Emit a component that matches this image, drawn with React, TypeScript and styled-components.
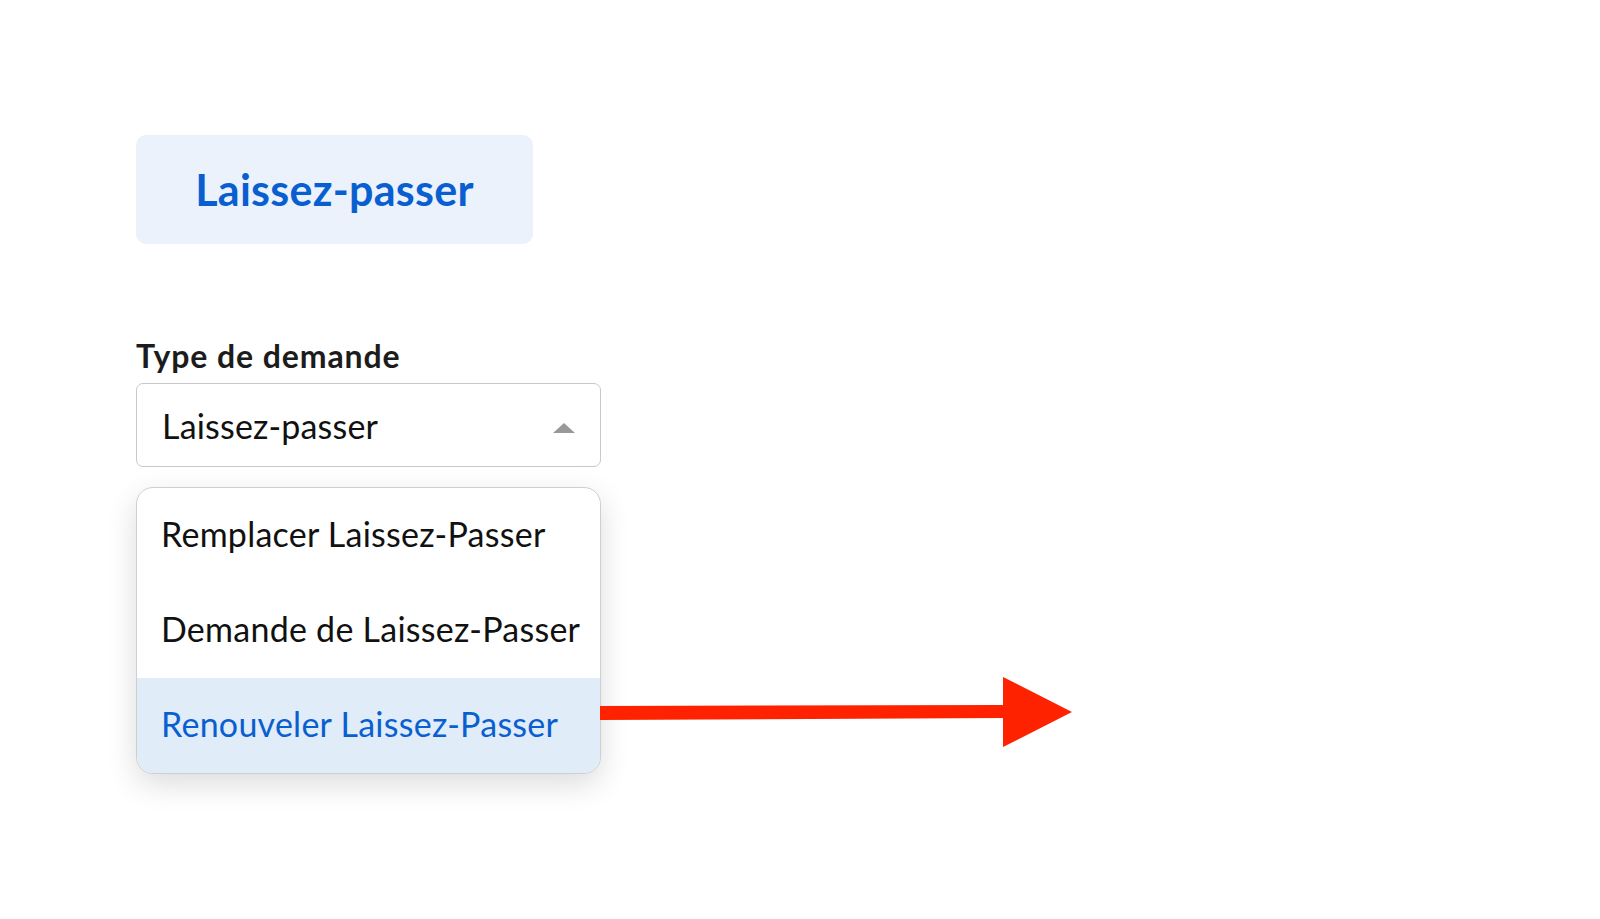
import styled, { createGlobalStyle } from "styled-components"

const Global = createGlobalStyle`
  html, body {
    margin: 0;
    padding: 0;
    background: #ffffff;
  }
  body {
    font-family: Lato, "Open Sans", sans-serif;
    color: #1a1a1a;
  }
`

const Page = styled.div`
  position: relative;
  width: 1600px;
  height: 919px;
  padding: 135px 0 0 136px;
  box-sizing: border-box;
`

const Badge = styled.div`
  display: flex;
  align-items: center;
  justify-content: center;
  width: 397px;
  height: 109px;
  border-radius: 10px;
  background: #ebf2fc;
  color: #0a5fd0;
  font-size: 43px;
  font-weight: 700;
  letter-spacing: 0.3px;
`

const Field = styled.div`
  display: flex;
  flex-direction: column;
  width: 465px;
  margin-top: 93px;
`

const Label = styled.label`
  font-size: 32px;
  font-weight: 700;
  line-height: 38px;
  letter-spacing: 0.9px;
  color: #1c1c1c;
  margin-bottom: 8px;
`

const Select = styled.div`
  display: flex;
  align-items: center;
  justify-content: space-between;
  height: 84px;
  box-sizing: border-box;
  padding: 0 25px 0 25px;
  border: 1.5px solid #c9c9c9;
  border-radius: 7px;
  font-size: 34px;
  letter-spacing: 0.2px;
  color: #111;
`

const Caret = styled.span`
  width: 0;
  height: 0;
  border-left: 11.5px solid transparent;
  border-right: 11.5px solid transparent;
  border-bottom: 10px solid #999999;
  margin-top: 6px;
`

const Menu = styled.ul`
  list-style: none;
  margin: 20px 0 0 0;
  padding: 0;
  border: 1.5px solid #cfcfcf;
  border-radius: 17px;
  overflow: hidden;
  box-shadow: 0 10px 30px rgba(0, 0, 0, 0.14);
  background: #fff;
`

const Item = styled.li<{ $active?: boolean }>`
  display: flex;
  align-items: center;
  height: 95px;
  padding: 0 0 4px 24px;
  box-sizing: border-box;
  font-size: 34px;
  letter-spacing: 0.25px;
  color: ${({ $active }) => ($active ? "#0a5fd0" : "#111")};
  background: ${({ $active }) => ($active ? "#e0ecf8" : "transparent")};
`

const Arrow = styled.svg`
  position: absolute;
  left: 600px;
  top: 675px;
`

const options = [
  "Remplacer Laissez-Passer",
  "Demande de Laissez-Passer",
  "Renouveler Laissez-Passer",
]

export default function App() {
  return (
    <>
      <Global />
      <Page>
        <Badge>Laissez-passer</Badge>
        <Field>
          <Label>Type de demande</Label>
          <Select>
            <span>Laissez-passer</span>
            <Caret />
          </Select>
          <Menu>
            {options.map((o, i) => (
              <Item key={o} $active={i === 2}>
                {o}
              </Item>
            ))}
          </Menu>
        </Field>
        <Arrow width="475" height="75" viewBox="0 0 475 75">
          <polygon points="0,31 404,30 404,43 0,45" fill="#ff2200" />
          <polygon points="403,2 472,37 403,72" fill="#ff2200" />
        </Arrow>
      </Page>
    </>
  )
}
